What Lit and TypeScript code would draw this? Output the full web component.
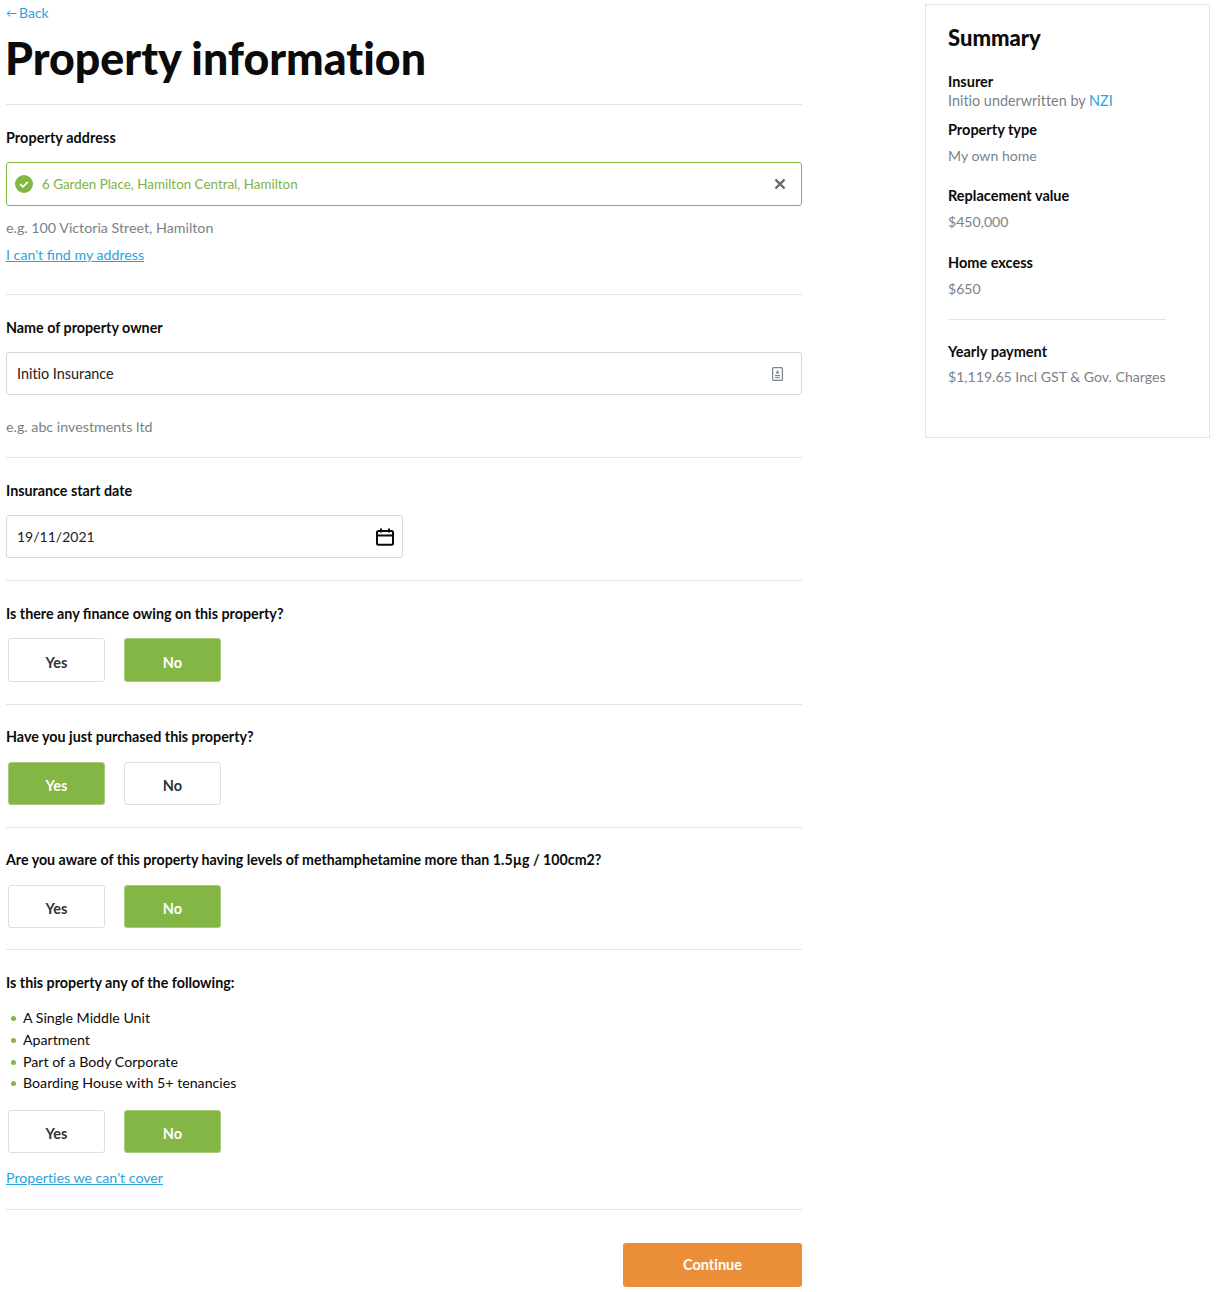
import { LitElement, html, css } from "lit";
import { customElement } from "lit/decorators.js";

@customElement("yes-no")
class YesNo extends LitElement {
  static properties = { value: { type: String } };
  value = "No";
  static styles = css`
    :host { display: flex; gap: 19px; padding-left: 2px; height: 43px; }
    .opt {
      width: 97px; box-sizing: border-box; display: flex; align-items: center; justify-content: center;
      border: 1px solid #dcdee0; border-radius: 3px; background: #fff; color: #333;
      font: 700 14.5px/20px Lato, sans-serif; padding-top: 5px;
    }
    .on { background: #83b644; border-color: #a9cc7c; color: #fff; }
  `;
  render() {
    return html`${["Yes", "No"].map((o) => html`<div class="opt ${o === this.value ? "on" : ""}">${o}</div>`)}`;
  }
}

@customElement("app-root")
export class AppRoot extends LitElement {
  static styles = css`
    :host { display: block; font-family: Lato, sans-serif; color: #0b0b0b; font-size: 14px; line-height: 20px; font-variant-ligatures: none; }
    .page { display: flex; align-items: flex-start; padding-left: 6px; min-height: 1292px; box-sizing: border-box; }
    main { width: 796px; flex: none; }
    a { color: #29a3dc; }
    .back { display: flex; align-items: center; gap: 2px; height: 20px; margin-top: 3px; text-decoration: none; }
    h1 { margin: 0 0 0 -1px; font-size: 44.7px; line-height: 56px; font-weight: 900; height: 81px; padding-top: 7px; box-sizing: border-box; }
    section, .head { border-bottom: 1px solid #e3e4e6; }
    section { padding: 23px 0 22px; }
    .label { font-weight: 700; font-size: 14.3px; margin-bottom: 14px; }
    .label-wide { letter-spacing: 0.12px; }
    .label-long { font-size: 14.23px; }
    .lig { font-variant-ligatures: normal; }
    .tall { height: 44px; }
    .field {
      height: 43px; box-sizing: border-box; border: 1px solid #d6d8da; border-radius: 3px; display: flex; align-items: center;
      padding: 0 18px 0 10px; justify-content: space-between; font-size: 14.4px; color: #222;
    }
    .addr { height: 44px; border-color: #83b644; color: #7fb23f; font-size: 13.4px; padding: 0 15px 0 8px; }
    .addr span { display: flex; align-items: center; gap: 9px; }
    .date { width: 397px; padding-right: 8px; font-size: 14px; }
    .hint { color: #7b8287; font-size: 14.25px; }
    .link { display: block; font-size: 14.2px; }
    ul { list-style: none; margin: 0; padding: 0; font-size: 14.2px; }
    li { position: relative; padding-left: 17px; height: 21.75px; line-height: 22px; }
    li::before { content: ""; position: absolute; left: 5px; top: 9px; width: 5px; height: 5px; border-radius: 50%; background: #83b644; }
    .foot { display: flex; justify-content: flex-end; padding-top: 33px; }
    .continue {
      width: 179px; height: 44px; border-radius: 3px; background: #ea8f37; color: #fff; font-weight: 700; font-size: 14.5px; display: flex;
      align-items: center; justify-content: center; box-sizing: border-box;
    }
    aside {
      width: 285px; height: 434px; margin: 4px 0 0 123px; box-sizing: border-box; border: 1px solid #e3e4e6; flex: none;
      padding: 18px 22px 0; font-size: 14.1px;
    }
    h2 { margin: 0; font-size: 22px; line-height: 30px; font-weight: 900; }
    .k { font-weight: 700; font-size: 14.5px; }
    .v { color: #7b8287; }
    .wide { font-size: 14.4px; }
    .sep { height: 1px; background: #e3e4e6; width: 218px; margin: 20px 0 22px; }
    .m-19 { margin-top: 19px; } .m-9 { margin-top: 9px; } .m-20 { margin-top: 20px; } .m-21 { margin-top: 21px; }
    .m-6 { margin-top: 6px; } .m-5 { margin-top: 5px; } .m-n1 { margin-top: -1px; }
    .nz { text-decoration: none; }
    .hm-12 { margin-top: 12px; } .hm-7 { margin-top: 7px; } .hm-22 { margin-top: 22px; } .hm-15 { margin-top: 15px; } .hm-16 { margin-top: 16px; }
    .arrow { font-size: 11px; }
    .l15 { margin-bottom: 15px; }
    .pb29 { padding-bottom: 29px; } .pb20 { padding-bottom: 20px; } .pt22 { padding-top: 22px; } .pb21 { padding-bottom: 21px; }
  `;
  render() {
    const summary = html`<aside>
      <h2>Summary</h2>
      <div class="k m-19">Insurer</div>
      <div class="v wide m-n1">Initio underwritten by <a class="nz">NZI</a></div>
      <div class="k m-9">Property type</div>
      <div class="v m-6">My own home</div>
      <div class="k m-20">Replacement value</div>
      <div class="v m-6">$450,000</div>
      <div class="k m-21">Home excess</div>
      <div class="v m-6">$650</div>
      <div class="sep"></div>
      <div class="k">Yearly payment</div>
      <div class="v m-5">$1,119.65 Incl GST &amp; Gov. Charges</div>
    </aside>`;
    return html`<div class="page">
      <main>
        <div class="head">
          <a class="back"><span class="arrow">←</span>Back</a>
          <h1>Property information</h1>
        </div>
        <section class="pb29">
          <div class="label label-wide">Property address</div>
          <div class="field addr">
            <span>
              <svg width="18" height="18" viewBox="0 0 18 18"><circle cx="9" cy="9" r="9" fill="#83b644"/><path d="M5.2 9.2l2.7 2.6 4.9-5" fill="none" stroke="#fff" stroke-width="1.8"/></svg>
              6 Garden Place, Hamilton Central, Hamilton
            </span>
            <svg width="12" height="12" viewBox="0 0 12 12"><path d="M1.5 1.5l9 9M10.5 1.5l-9 9" stroke="#5f6b70" stroke-width="2.4"/></svg>
          </div>
          <div class="hint hm-12">e.g. 100 Victoria Street, Hamilton</div>
          <a class="link lig hm-7" href="#">I can't find my address</a>
        </section>
        <section class="pb20">
          <div class="label">Name of property owner</div>
          <div class="field">
            Initio Insurance
            <svg width="11" height="14" viewBox="0 0 11 14"><rect x=".6" y=".6" width="9.8" height="12.8" rx="1" fill="#fff" stroke="#7b8287" stroke-width="1.2"/><path d="M5.5 3l2 3.4h-4z" fill="#7b8287"/><path d="M3 8h5v1.2H3zM3 10.2h5v1H3z" fill="#7b8287"/></svg>
          </div>
          <div class="hint hm-22">e.g. abc investments ltd</div>
        </section>
        <section>
          <div class="label">Insurance start date</div>
          <div class="field date">
            19/11/2021
            <svg width="18" height="18" viewBox="0 0 18 18" fill="none" stroke="#0b0b0b" stroke-width="2"><rect x="1" y="3" width="16" height="13.8" rx="1.5"/><path d="M1 7.6h16M5 .6v3.8M13 .6v3.8"/></svg>
          </div>
        </section>
        <section>
          <div class="label lig">Is there any finance owing on this property?</div>
          <yes-no class="tall" value="No"></yes-no>
        </section>
        <section class="pt22">
          <div class="label l15">Have you just purchased this property?</div>
          <yes-no value="Yes"></yes-no>
        </section>
        <section class="pt22 pb21">
          <div class="label label-long l15">Are you aware of this property having levels of methamphetamine more than 1.5µg / 100cm2?</div>
          <yes-no value="No"></yes-no>
        </section>
        <section class="pb21">
          <div class="label">Is this property any of the following:</div>
          <ul>
            <li>A Single Middle Unit</li>
            <li>Apartment</li>
            <li>Part of a Body Corporate</li>
            <li>Boarding House with 5+ tenancies</li>
          </ul>
          <yes-no class="hm-16" value="No"></yes-no>
          <a class="link hm-15" href="#">Properties we can't cover</a>
        </section>
        <div class="foot"><div class="continue">Continue</div></div>
      </main>
      ${summary}
    </div>`;
  }
}
